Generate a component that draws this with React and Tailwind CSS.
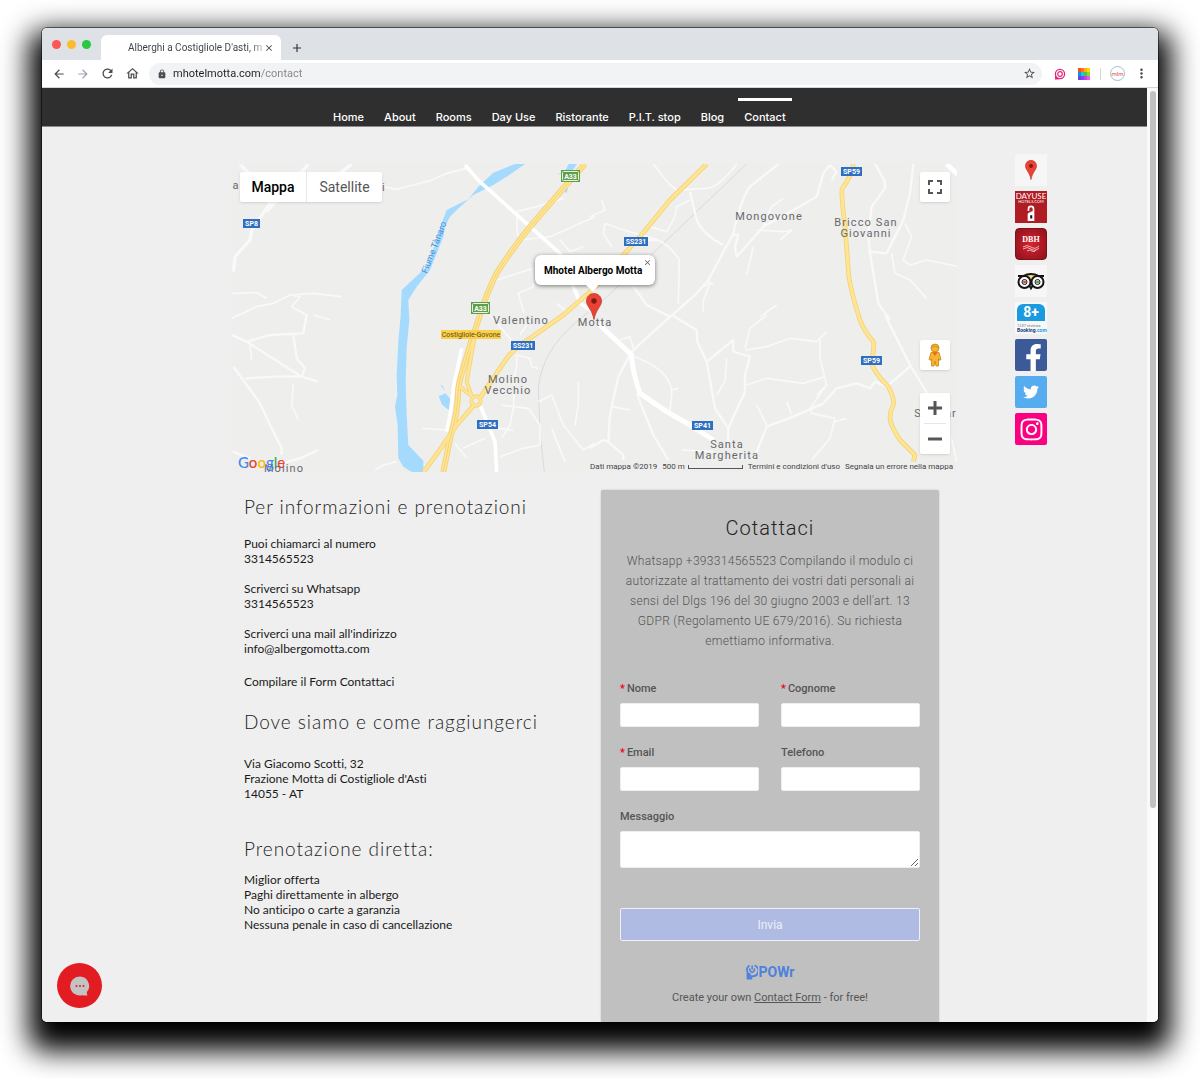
import React, { useState } from "react";
import { FaFacebookF, FaTwitter, FaInstagram } from "react-icons/fa";
import {
  MdArrowBack,
  MdArrowForward,
  MdRefresh,
  MdOutlineHome,
  MdLock,
  MdStarBorder,
  MdMoreVert,
  MdClose,
  MdAdd,
} from "react-icons/md";

const navItems = [
  "Home",
  "About",
  "Rooms",
  "Day Use",
  "Ristorante",
  "P.I.T. stop",
  "Blog",
  "Contact",
];

//place names on the map, x is the center and y the baseline
const places = [
  { name: "a", x: 4, y: 25 },
  { name: "i", x: 152, y: 27 },
  { name: "Mongovone", x: 537, y: 56 },
  { name: "Bricco San", x: 634, y: 62 },
  { name: "Giovanni", x: 634, y: 73 },
  { name: "Valentino", x: 289, y: 160 },
  { name: "Motta", x: 363, y: 162 },
  { name: "Molino", x: 276, y: 219 },
  { name: "Vecchio", x: 276, y: 230 },
  { name: "Santa", x: 495, y: 284 },
  { name: "Margherita", x: 495, y: 295 },
  { name: "S", x: 686, y: 253 },
  { name: "ar", x: 719, y: 253 },
  { name: "Molino", x: 52, y: 308 },
];

//road number shields
const shields = [
  { name: "SP8", x: 11, y: 55, w: 17 },
  { name: "SS231", x: 392, y: 73, w: 24 },
  { name: "SP59", x: 609, y: 3, w: 21 },
  { name: "SP59", x: 629, y: 192, w: 21 },
  { name: "SS231", x: 279, y: 177, w: 24 },
  { name: "SP54", x: 245, y: 256, w: 21 },
  { name: "SP41", x: 460, y: 257, w: 21 },
];

const motorway =
  "M1059 0L994 73L894 188Q835 262 794 328Q764 385 739 468L714 543L694 613Q678 660 678 690Q678 740 654 823L634 924";
const ss231 =
  "M1424 0L1314 108L1224 218L1174 273Q1120 340 1074 383L994 453L894 523Q850 550 824 583L745 700M725 725L674 783Q630 850 575 924";
const sp59 =
  "M1864 0Q1862 30 1830 75Q1828 100 1839 188L1849 318Q1850 360 1884 468Q1895 500 1924 533Q1928 560 1917 593Q1925 625 1969 668Q1990 710 1984 723Q1970 750 1976 775Q1985 800 2004 828L2049 873L2044 893";

const MapDrawing = () => (
  <svg viewBox="0 0 725 308" className="block w-full" aria-hidden="true">
    <rect width="725" height="308" fill="#eeeeed" />
    <g transform="scale(.33333)" fill="none" strokeLinejoin="round">
      {/* river and ponds */}
      <path
        fill="#a5daff"
        d="M879 0L839 28L784 63L724 93L674 138L654 158L639 188L634 218L594 318L554 368L529 408L532 468L524 553L521 653L524 753L529 843L574 890V924H539L514 908L499 883L497 783L489 728L496 693L494 633L499 533L506 453L509 378L584 308L614 228L629 178L644 138L709 106L739 68L784 26L849 0Z"
      />
      <path
        fill="#a5daff"
        d="M620 697L640 688L655 705L653 740L630 722ZM625 662L638 680L632 665ZM1010 0L1035 0L1020 22L975 32L1000 20ZM990 73L1008 70L1004 88Z"
      />
      {/* railway */}
      <path
        stroke="#dadada"
        strokeWidth="3"
        d="M1544 0L1294 238L1114 408L1034 473Q930 560 919 673L924 803L937 924"
      />
      {/* local roads, one group for each quarter of the map */}
      <g stroke="#f9f9f9" strokeWidth="5">
        <g transform="translate(-6 -12)">
          <path d="M460 80L500 88L560 72L600 62L650 40L710 25M5 475L80 440L130 430L180 405L250 400L335 410M8 400L80 398L110 415M180 405L210 410L185 440L230 465L225 480M250 465L300 480M870 240L960 230L1095 170M800 360L910 325M905 330L910 380L865 400L882 460M1000 115L920 140L860 155L862 220L870 240M990 240L1020 275L1060 260M1040 390L1050 420M980 430L1010 455" />
          <path
            strokeWidth="10"
            d="M30 12L75 60L120 130L65 210L60 240L15 290L10 335M235 12L150 110L110 155M110 100L130 140M365 12L330 40L240 90"
          />
        </g>
        <g transform="translate(-6 453)">
          <path
            strokeWidth="7"
            d="M5 60L50 80L215 185L265 200M45 190L130 185L215 185M50 80L120 60L220 55L230 0M190 60L200 130L225 160L215 185M10 155L50 210L90 265L120 330L155 400L155 420M155 445L210 430L265 405M8 410L60 430"
          />
          <path d="M190 205L185 270L205 315M60 90L65 135M435 465L460 450L500 440M860 120L860 150L855 180L850 280L840 330L815 370M815 270L895 280L930 330L930 390L880 400L810 425M925 260L965 240L1000 330L1060 405L1095 385M575 340L650 345M675 385L710 430M965 340L1005 440M860 120L900 130L905 155L925 160M700 400L765 370M800 340L850 345M1045 200L1045 270L1035 330M780 0L840 70L845 90M870 60L890 30" />
        </g>
        <g transform="translate(1074 -12)">
          <path d="M440 12Q390 80 350 85L260 90L235 70L190 12M45 190L100 210L170 230Q230 240 268 300L265 430M45 190L40 220L65 260M300 120L260 140L255 170L230 215L180 200M490 260L470 345M945 190L965 230L940 300L960 315L1010 300L1105 320M905 280L915 340L960 360L1010 415M500 210L580 215L605 210L570 240M520 200L545 140L580 115M560 435L510 470M0 170L45 150L35 120M340 380L360 370L340 420L340 455M370 375L350 360" />
          <path
            strokeWidth="7"
            d="M565 12L480 80Q455 110 430 220L355 360L320 400L235 475M300 95L320 180Q340 225 400 255M720 15L700 40L680 110L610 150L520 200L440 290L435 260L445 225L425 225M720 15L740 35L725 60M970 12L960 100L940 180L890 280L840 275M855 12L885 65L885 85L845 140L835 220L840 280L855 370L865 430L900 480M130 380L170 435L240 470M165 240L205 240"
          />
          <path strokeWidth="14" stroke="#fff" d="M1070 12L1105 45" />
        </g>
        <g transform="translate(1074 453)">
          <path
            strokeWidth="7"
            d="M245 0L125 110L85 185L75 230L60 300L55 380L100 420L100 435M0 400L40 375L55 380M245 0L320 45L322 80L350 140L375 280L415 340L415 380M350 140L430 75L430 110L480 125L465 180L465 230L415 340M490 435L530 335L610 305L700 265L740 220L800 205L840 220L855 200L890 215L965 150M885 0L960 150L1015 240M140 235L190 360L235 435"
          />
          <path d="M465 105L530 95L600 70L680 80L710 50M690 75L690 130L710 210L660 280L665 295L735 310L720 370L665 435M470 210L530 190L640 205L705 185M135 125Q250 170 245 240L240 285M465 100L480 40L530 0M275 405L370 410M1085 370L1100 440M410 130L405 200L380 240M65 275L120 285M245 225L265 220M500 270L530 330M590 260L605 300M735 320L770 310M680 240L710 210M90 75L120 65L130 100" />
        </g>
      </g>
      <g stroke="#fff" strokeWidth="11">
        <path d="M699 3L740 50L984 268L1044 418L1089 448M744 723L789 833L794 924M689 553L666 663L654 753L644 803" />
        <path
          strokeWidth="15"
          d="M1100 480L1114 493L1199 573Q1200 620 1224 688L1304 743L1374 783L1444 828"
        />
      </g>
      {/* main roads */}
      <g stroke="#f3d27a">
        <path strokeWidth="18" d={motorway} />
        <path strokeWidth="14" d={ss231} />
        <path strokeWidth="14" d={sp59} />
        <path strokeWidth="12" d="M737 468L704 653L720 700M680 665L715 693" />
        <circle cx="732" cy="711" r="14" strokeWidth="12" />
      </g>
      <g stroke="#ffe592">
        <path strokeWidth="12" d={motorway} />
        <path strokeWidth="9" d={ss231} />
        <path strokeWidth="9" d={sp59} />
        <path strokeWidth="7" d="M737 468L704 653L720 700M680 665L715 693" />
        <circle cx="732" cy="711" r="14" strokeWidth="7" />
      </g>
      <path stroke="#f3d27a" strokeWidth="3" d={motorway} />
    </g>

    <g fontFamily="Roboto, sans-serif">
      <text
        x="0"
        y="0"
        transform="translate(195 110) rotate(-69)"
        fontSize="9"
        fill="#3f8fd6"
      >
        Fiume Tànaro
      </text>
      <g
        fontSize="11"
        fill="#66696c"
        textAnchor="middle"
        className="tracking-widest"
      >
        {places.map((p) => (
          <text key={p.name + p.x + p.y} x={p.x} y={p.y}>
            {p.name}
          </text>
        ))}
      </g>
      <g fontSize="7" fontWeight="700" textAnchor="middle" fill="#fff">
        {shields.map((s) => (
          <g key={s.name + s.x}>
            <rect x={s.x} y={s.y} width={s.w} height="9" fill="#2f6fc1" />
            <text x={s.x + s.w / 2} y={s.y + 7}>
              {s.name}
            </text>
          </g>
        ))}
        {[
          { x: 329, y: 6 },
          { x: 239, y: 138 },
        ].map((s) => (
          <g key={s.x}>
            <rect x={s.x} y={s.y} width="19" height="12" fill="#5f9e4a" />
            <rect
              x={s.x + 1.5}
              y={s.y + 1.5}
              width="16"
              height="9"
              rx="1"
              fill="none"
              stroke="#e8f3e2"
            />
            <text x={s.x + 9.5} y={s.y + 8.5}>
              A33
            </text>
          </g>
        ))}
      </g>
      <rect x="209" y="166" width="60" height="9" fill="#fbd04c" />
      <text x="239" y="173" fontSize="7" fill="#5c4a12" textAnchor="middle">
        Costigliole-Govone
      </text>
    </g>
  </svg>
);

const PinIcon = ({ className }) => (
  <svg viewBox="0 0 16 27" className={className} aria-hidden="true">
    <path
      d="M8 .5C3.800.5.5 3.800.5 8c0 5.500 5.500 8 7.500 18.500C10 16 15.500 13.500 15.500 8 15.500 3.800 12.200.5 8 .5z"
      fill="#ea4335"
      stroke="#c5392e"
      strokeWidth=".8"
    />
    <circle cx="8" cy="8" r="2.700" fill="#7d1a14" />
  </svg>
);

const PegmanIcon = () => (
  <svg viewBox="0 0 14 24" className="h-6 w-4" aria-hidden="true">
    <path
      d="M3 9.500h8l2 7-2 .8-.5-1.500V23H8l-1-5-1 5H3.500v-7.200L3 17.300l-2-.8z"
      fill="#f9b42d"
      stroke="#c98212"
      strokeWidth=".8"
    />
    <path d="M4.500 9.500h5L7 13z" fill="#e8622c" />
    <circle cx="7" cy="5" r="4" fill="#f9b42d" stroke="#c98212" strokeWidth=".8" />
    <path d="M3.500 4.500q3.500-3 7 0" stroke="#c98212" strokeWidth=".8" fill="none" />
  </svg>
);

//plus, minus and fullscreen of the map controls
const ControlIcon = ({ d, strokeWidth }) => (
  <svg viewBox="0 0 14 14" className="h-[14px] w-[14px]" aria-hidden="true">
    <path d={d} fill="none" stroke="#565656" strokeWidth={strokeWidth} />
  </svg>
);

const HotelMap = () => {
  const [popupOpen, setPopupOpen] = useState(true);

  return (
    <section
      aria-label="Mappa"
      className="relative overflow-hidden font-[Roboto,sans-serif]"
    >
      <MapDrawing />

      <div className="absolute top-2 left-2 flex h-[30px] rounded-xs bg-white text-sm shadow">
        <button className="w-[67px] border-r border-gray-200 font-medium text-black">
          Mappa
        </button>
        <button className="w-[75px] text-[#565656]">Satellite</button>
      </div>

      <button
        aria-label="Schermo intero"
        className="absolute top-2 right-[7px] flex h-[30px] w-[30px] items-center justify-center rounded-xs bg-white shadow"
      >
        <ControlIcon
          d="M1 5V1h4M9 1h4v4M13 9v4H9M5 13H1V9"
          strokeWidth="2"
        />
      </button>
      <button
        aria-label="Street View"
        className="absolute right-[7px] bottom-[102px] flex h-[30px] w-[30px] items-center justify-center rounded-xs bg-white shadow"
      >
        <PegmanIcon />
      </button>
      <div className="absolute right-[7px] bottom-[18px] flex w-[30px] flex-col items-center rounded-xs bg-white shadow">
        <button
          aria-label="Zoom avanti"
          className="flex h-[30px] items-center"
        >
          <ControlIcon d="M7 0v14M0 7h14" strokeWidth="3" />
        </button>
        <span className="h-px w-[22px] bg-gray-200" />
        <button
          aria-label="Zoom indietro"
          className="flex h-[30px] items-center"
        >
          <ControlIcon d="M0 7h14" strokeWidth="3" />
        </button>
      </div>

      {/* marker with its popup */}
      <PinIcon className="absolute top-[129px] left-[354px] h-[27px] w-4" />
      {popupOpen && (
        <div className="absolute top-[91px] left-[303px] flex h-[30px] w-[120px] items-center rounded-md bg-white pl-[9px] text-[10px] font-bold text-black shadow-[0_1px_4px_rgba(0,0,0,0.5)]">
          Mhotel Albergo Motta
          <button
            aria-label="Chiudi"
            onClick={() => setPopupOpen(false)}
            className="absolute top-[3px] right-[3px] text-[#666]"
          >
            <MdClose size={9} />
          </button>
          <svg
            viewBox="0 0 14 8"
            className="absolute top-[29px] left-[50px] h-2 w-[14px]"
            aria-hidden="true"
          >
            <path d="M0 0h14L9 7q-1 1-2 0z" fill="#fff" />
          </svg>
        </div>
      )}

      <a
        href="#google"
        aria-label="Google"
        className="absolute bottom-0 left-[6px] font-[Lato,sans-serif] text-[15px] leading-5 font-medium"
      >
        <span className="text-[#4285f4]">G</span>
        <span className="text-[#ea4335]">o</span>
        <span className="text-[#fbbc05]">o</span>
        <span className="text-[#4285f4]">g</span>
        <span className="text-[#34a853]">l</span>
        <span className="text-[#ea4335]">e</span>
      </a>
      <div className="absolute right-0 bottom-0 flex items-center gap-[5px] pr-1 text-[8px] leading-[10px] text-[#444]">
        <span>Dati mappa ©2019</span>
        <span className="flex items-center gap-[3px]">
          500 m
          <span className="h-1 w-[55px] border border-t-0 border-[#555]" />
        </span>
        <a href="#termini">Termini e condizioni d'uso</a>
        <a href="#segnala">Segnala un errore nella mappa</a>
      </div>
    </section>
  );
};

const TripadvisorIcon = () => (
  <svg viewBox="0 0 32 32" className="h-8 w-8" aria-hidden="true">
    <path d="M7 11q9-4.500 18 0l-3 1q-5 2-6 7-1-5-6-7z" fill="#f5dc7c" />
    <path
      d="M3 11h5q8-4 16 0h5M10 12q5 2 6 7 1-5 6-7M14 20l2 3.500 2-3.500"
      fill="none"
      stroke="#151515"
      strokeWidth="1.800"
    />
    <circle cx="9.500" cy="17" r="6" fill="#fff" stroke="#151515" strokeWidth="2" />
    <circle cx="22.500" cy="17" r="6" fill="#fff" stroke="#151515" strokeWidth="2" />
    <circle cx="9.500" cy="17" r="2.500" fill="#fff" stroke="#151515" />
    <circle cx="22.500" cy="17" r="2.500" fill="#fff" stroke="#151515" />
    <circle cx="9.500" cy="17" r="1.500" fill="#e0403a" />
    <circle cx="22.500" cy="17" r="1.500" fill="#4c9a56" />
  </svg>
);

const SocialBar = () => (
  <aside className="flex flex-col items-start gap-[5px] pt-[27px] pl-[58px]">
    <a
      href="#maps"
      aria-label="Google Maps"
      className="flex h-8 w-8 items-center justify-center bg-[#f6f6f6]"
    >
      <PinIcon className="h-5 w-3" />
    </a>
    <a
      href="#dayuse"
      className="flex h-8 w-8 flex-col items-center bg-[#b01c24] font-[Lato,sans-serif] text-white"
    >
      <span className="pt-px text-[8px] leading-[8px]">DAYUSE</span>
      <span className="text-[4px] leading-[4px]">HOTELS.COM</span>
      <svg viewBox="0 0 12 20" className="mt-px h-[17px] w-[10px]" aria-hidden="true">
        <path
          d="M3 7V4.500a3 3 0 0 1 6 0V18H3v-7l5-3"
          fill="none"
          stroke="#fff"
          strokeWidth="2"
        />
        <path d="M3 9h6v10H3z" fill="#fff" />
        <path d="M5 12h2.500v4H5z" fill="#2b1010" />
      </svg>
    </a>
    <a
      href="#dbh"
      className="flex h-8 w-8 flex-col items-center rounded-sm border border-[#7d1018] bg-radial from-[#d8232f] to-[#8d121b] pt-[7px] font-[Liberation_Serif,serif] text-[8px] leading-[8px] font-bold text-white"
    >
      DBH
      <svg viewBox="0 0 18 8" className="h-2 w-[18px]" aria-hidden="true">
        <path
          d="M1 3q4-3 8 0t8-1M1 5q4-3 8 0t8-1M5 7q3-2 5 0t4-1"
          fill="none"
          stroke="#f0c6c8"
          strokeWidth=".9"
        />
      </svg>
    </a>
    <a href="#tripadvisor" aria-label="Tripadvisor" className="bg-[#f6f6f6]">
      <TripadvisorIcon />
    </a>
    <a
      href="#booking"
      className="flex h-8 w-8 flex-col bg-[#f8f8f8] p-[2px] font-[Roboto,sans-serif]"
    >
      <span className="h-[17px] rounded-t-md bg-[#1a9be0] text-center text-sm leading-[17px] font-bold text-white">
        8+
      </span>
      <span className="pt-[2px] text-[4px] leading-[5px] text-gray-500">
        1237 reviews
      </span>
      <span className="text-[5px] leading-[5px] font-bold text-[#123a7c]">
        Booking<span className="text-[#1a9be0]">.com</span>
      </span>
    </a>
    <a
      href="#facebook"
      aria-label="Facebook"
      className="flex h-8 w-8 items-end justify-end rounded-xs bg-[#3d5a98] text-white"
    >
      <FaFacebookF size={27} />
    </a>
    <a
      href="#twitter"
      aria-label="Twitter"
      className="flex h-8 w-8 items-center justify-center rounded-xs bg-[#55acee] text-white"
    >
      <FaTwitter size={16} />
    </a>
    <a
      href="#instagram"
      aria-label="Instagram"
      className="flex h-8 w-8 items-center justify-center rounded-xs bg-[#fb0080] text-white"
    >
      <FaInstagram size={25} />
    </a>
  </aside>
);

const Field = ({ id, label, type = "text", required }) => (
  <div className="flex flex-col">
    <label
      htmlFor={id}
      className="h-[22px] text-[11px] leading-4 font-medium"
    >
      {required && <span className="mr-[2px] text-red-600">*</span>}
      {label}
    </label>
    <input
      id={id}
      type={type}
      required={required}
      className="h-6 w-full rounded-xs border border-[#eee] bg-white px-2"
    />
  </div>
);

const ContactForm = () => {
  const onSubmitHandler = (e) => {
    e.preventDefault();
  };

  return (
    <form
      onSubmit={onSubmitHandler}
      className="rounded-t-xs bg-[#c0c0c0] px-[19px] pt-6 pb-4 font-[Roboto,sans-serif] text-xs text-[#555] shadow-[0_0_2px_rgba(0,0,0,0.2)]"
    >
      <h2 className="text-center text-xl leading-7 font-light tracking-wider text-[#222]">
        Cotattaci
      </h2>
      <p className="mt-[9px] text-center leading-5 font-light tracking-wide">
        Whatsapp +393314565523 Compilando il modulo ci autorizzate al
        trattamento dei vostri dati personali ai sensi del Dlgs 196 del 30
        giugno 2003 e dell'art. 13 GDPR (Regolamento UE 679/2016). Su richiesta
        emettiamo informativa.
      </p>

      <div className="mt-[30px] grid grid-cols-2 gap-x-[22px] gap-y-[18px]">
        <Field id="nome" label="Nome" required />
        <Field id="cognome" label="Cognome" required />
        <Field id="email" label="Email" type="email" required />
        <Field id="telefono" label="Telefono" type="tel" />
        <div className="col-span-2 flex flex-col">
          <label
            htmlFor="messaggio"
            className="h-[22px] text-[11px] leading-4 font-medium"
          >
            Messaggio
          </label>
          <textarea
            id="messaggio"
            className="h-[37px] w-full rounded-xs border border-[#eee] bg-white px-2"
          />
        </div>
      </div>

      <button className="mt-10 h-[33px] w-full rounded-xs border border-[#eef0fa] bg-[#b0bbe3] text-[#eceffa]">
        Invia
      </button>

      <div className="mt-[22px] flex h-[18px] items-center justify-center gap-px text-sm font-bold text-[#4c82dc]">
        <svg viewBox="0 0 12 16" className="h-4 w-3" aria-hidden="true">
          <path
            d="M3.500 1.500A5 5 0 0 0 1.500 8v6.500h3.800V12A5.300 5.300 0 0 0 8.500 1.500"
            fill="none"
            stroke="currentColor"
            strokeWidth="1.800"
          />
          <path d="M1.500 9h3v5h-3z" fill="currentColor" />
          <path
            d="M4.200 4.500a2.300 2.300 0 1 0 3.800 0"
            fill="none"
            stroke="currentColor"
            strokeWidth="1.500"
          />
          <path d="M5.400 1.500h1.500v4H5.400z" fill="currentColor" />
        </svg>
        POWr
      </div>
      <p className="mt-[9px] text-center text-[11px] leading-4">
        Create your own{" "}
        <a href="#powr" className="underline">
          Contact Form
        </a>{" "}
        - for free!
      </p>
    </form>
  );
};

const InfoText = () => (
  <div className="pt-[5px] pl-3 font-[Lato,sans-serif] text-xs leading-[15px] text-[#1a1a1a] [font-variant-ligatures:none]">
    <h2 className="text-[19px] leading-6 font-light tracking-wider text-[#222]">
      Per informazioni e prenotazioni
    </h2>
    <p className="mt-[17px]">
      Puoi chiamarci al numero
      <br />
      3314565523
    </p>
    <p className="mt-[15px]">
      Scriverci su Whatsapp
      <br />
      3314565523
    </p>
    <p className="mt-[15px]">
      Scriverci una mail all'indirizzo
      <br />
      info@albergomotta.com
    </p>
    <p className="mt-[18px]">Compilare il Form Contattaci</p>

    <h2 className="mt-[21px] text-[19px] leading-6 font-light tracking-wider text-[#222]">
      Dove siamo e come raggiungerci
    </h2>
    <p className="mt-[22px]">
      Via Giacomo Scotti, 32
      <br />
      Frazione Motta di Costigliole d'Asti
      <br />
      14055 - AT
    </p>

    <h2 className="mt-9 text-[19px] leading-6 font-light tracking-wider text-[#222]">
      Prenotazione diretta:
    </h2>
    <p className="mt-[11px]">
      Miglior offerta
      <br />
      Paghi direttamente in albergo
      <br />
      No anticipo o carte a garanzia
      <br />
      Nessuna penale in caso di cancellazione
    </p>
  </div>
);

const paletteColors = [
  "#f4511e", "#ff7a1a", "#ffb300", "#ffd600",
  "#1e88e5", "#26c6da", "#43c94b", "#8bd93a",
  "#5b4be0", "#8a3ff0", "#c53ff0", "#e85ae8",
];

const BrowserHeader = () => (
  <header className="font-[Roboto,sans-serif]">
    <div className="flex h-8 items-end bg-[#dee1e6] pl-[10px]">
      <div className="mr-[10px] flex items-center gap-[6px] pb-[11px]">
        <span className="h-[9px] w-[9px] rounded-full bg-[#fc5753]" />
        <span className="h-[9px] w-[9px] rounded-full bg-[#fdbc2f]" />
        <span className="h-[9px] w-[9px] rounded-full bg-[#28c840]" />
      </div>
      <div className="flex h-[25px] w-[180px] items-center rounded-t-md bg-white pr-[7px] pl-[27px]">
        <span className="flex-1 bg-linear-to-r from-[#3c4043] from-90% to-gray-300 bg-clip-text text-[10px] whitespace-nowrap text-transparent">
          Alberghi a Costigliole D'asti, m
        </span>
        <button aria-label="Chiudi scheda" className="text-[#444]">
          <MdClose size={10} />
        </button>
      </div>
      <button
        aria-label="Nuova scheda"
        className="flex h-[25px] w-8 items-center justify-center text-[#333]"
      >
        <MdAdd size={14} />
      </button>
    </div>

    <div className="flex h-7 items-center border-b border-gray-300 bg-white pr-[9px] pl-[10px] text-[#4a4d51]">
      <div className="mr-[9px] flex items-center gap-[10px]">
        <button aria-label="Indietro">
          <MdArrowBack size={14} />
        </button>
        <button aria-label="Avanti" className="text-gray-400">
          <MdArrowForward size={14} />
        </button>
        <button aria-label="Ricarica">
          <MdRefresh size={15} />
        </button>
        <button aria-label="Pagina iniziale">
          <MdOutlineHome size={15} />
        </button>
      </div>
      <div className="flex h-[22px] flex-1 items-center rounded-full bg-[#f1f3f4] pr-[6px] pl-2">
        <MdLock size={10} />
        {/* the domain is darker than the rest of the address */}
        <input
          aria-label="Indirizzo"
          className="ml-[6px] h-5 min-w-0 flex-1 bg-linear-to-r from-[#202124] from-[87px] to-[#80868b] to-[87px] bg-clip-text text-[11px] text-transparent"
          defaultValue="mhotelmotta.com/contact"
        />
        <button aria-label="Aggiungi ai preferiti">
          <MdStarBorder size={13} />
        </button>
      </div>
      <svg viewBox="0 0 12 12" className="ml-3 h-3 w-3" aria-hidden="true">
        <circle cx="6" cy="6" r="4.600" fill="none" stroke="#e5267d" strokeWidth="1.300" />
        <circle cx="6" cy="6" r="2.300" fill="none" stroke="#e5267d" strokeWidth="1.200" />
        <path d="M1 7v4.500h4z" fill="#e5267d" />
      </svg>
      <div className="ml-3 grid h-3 w-3 grid-cols-4">
        {paletteColors.map((color) => (
          <span key={color} style={{ backgroundColor: color }} />
        ))}
      </div>
      <span className="ml-[10px] h-3 w-px bg-gray-300" />
      <span className="ml-[9px] flex h-[15px] w-[15px] items-center justify-center rounded-full border border-[#9fc3c9] text-[6px] text-[#e04a4a]">
        mlm
      </span>
      <button aria-label="Menu" className="ml-[9px]">
        <MdMoreVert size={15} />
      </button>
    </div>
  </header>
);

const SiteNav = () => (
  <nav className="flex h-[39px] justify-center border-b border-[#8a8a8a] bg-[#2f2f2f]">
    <ul className="flex w-[725px] gap-2 pt-[10px] pl-[95px] font-[Inter,sans-serif] text-[11px] leading-4 font-medium text-white">
      {navItems.map((item) => (
        <li key={item}>
          <a
            href="#nav"
            className={
              item === "Contact"
                ? "block border-t-3 border-white px-[6px] pt-2"
                : "block border-t-3 border-transparent px-[6px] pt-2"
            }
          >
            {item}
          </a>
        </li>
      ))}
    </ul>
  </nav>
);

const App = () => {
  return (
    <div className="min-h-screen overflow-hidden bg-white px-[42px] pt-7 pb-14">
      <div className="rounded-[5px] shadow-[0_0_0_1px_rgba(0,0,0,0.5),0_16px_28px_13px_#000]">
        <div className="relative overflow-hidden rounded-[5px] bg-[#efefef]">
          <BrowserHeader />
          <div className="flex">
            <div className="min-w-0 flex-1">
              <SiteNav />
              <div className="grid grid-cols-[1fr_725px_1fr]">
                <span />
                <main className="pt-[37px]">
                  <HotelMap />
                  <div className="mt-[18px] grid grid-cols-[369px_338px]">
                    <InfoText />
                    <ContactForm />
                  </div>
                </main>
                <SocialBar />
              </div>
            </div>
            {/* scrollbar */}
            <div className="flex w-[11px] justify-center bg-[#fafafa] pt-[3px]">
              <span className="h-[77%] w-[6px] rounded-full bg-[#c1c1c1]" />
            </div>
          </div>
          <button
            aria-label="Apri chat"
            className="absolute bottom-[14px] left-[15px] flex h-[45px] w-[45px] items-center justify-center rounded-full bg-[#e31b23]"
          >
            <svg viewBox="0 0 20 20" className="h-5 w-5" aria-hidden="true">
              <path
                d="M10 .5a9.500 9.500 0 1 0 2 18.700q3.500.6 5.500.3-.8-1.500-.6-3.400A9.500 9.500 0 0 0 10 .5z"
                fill="#c3c3c3"
              />
              <g fill="#e31b23">
                <circle cx="6.500" cy="10" r="1" />
                <circle cx="10" cy="10" r="1" />
                <circle cx="13.500" cy="10" r="1" />
              </g>
            </svg>
          </button>
        </div>
      </div>
    </div>
  );
};

export default App;
